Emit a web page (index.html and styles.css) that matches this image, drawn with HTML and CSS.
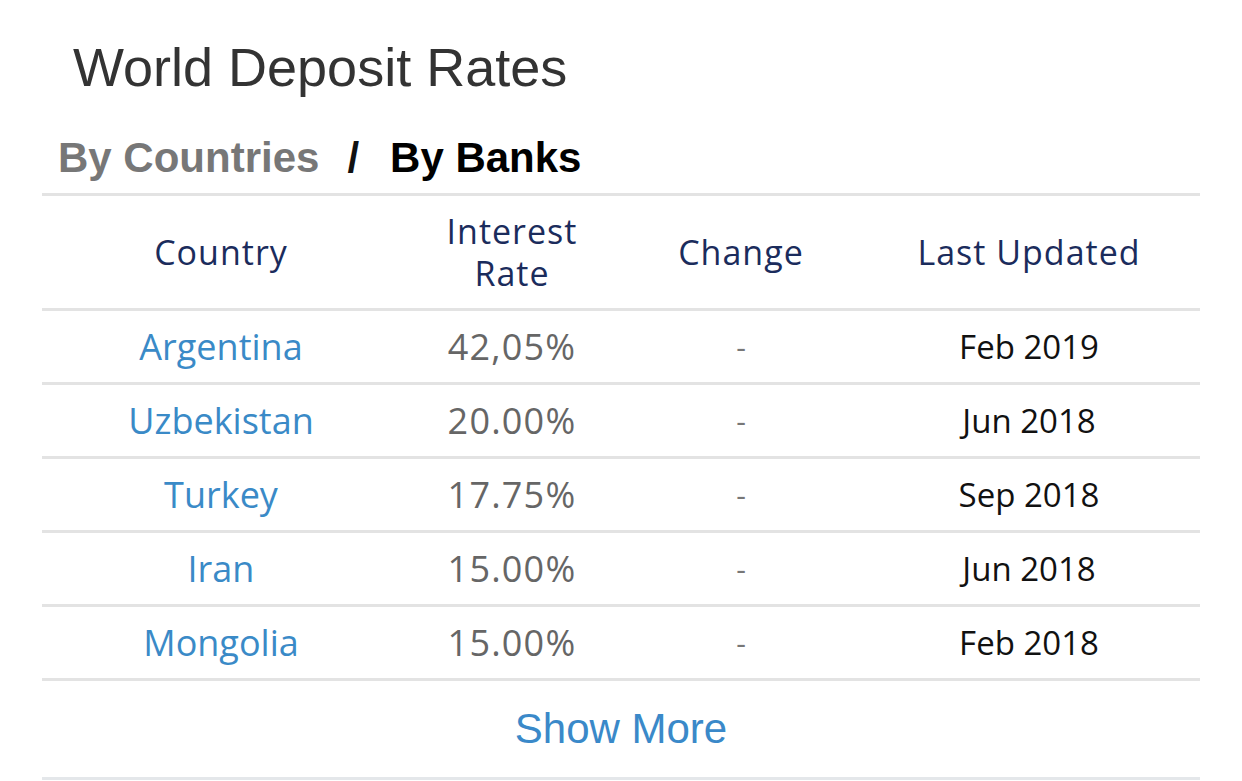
FILE: index.html
```html
<!DOCTYPE html>
<html>
<head>
<meta charset="utf-8">
<link rel="stylesheet" href="styles.css">
</head>
<body>
<div class="page">
  <h1 class="title">World Deposit Rates</h1>
  <div class="tabs">
    <span class="tab tab-inactive">By Countries</span>
    <span class="tab-sep">/</span>
    <span class="tab tab-active">By Banks</span>
  </div>
  <div class="table">
    <div class="row head">
      <div class="cell c1">Country</div>
      <div class="cell c2">Interest<br>Rate</div>
      <div class="cell c3">Change</div>
      <div class="cell c4">Last Updated</div>
    </div>
    <div class="row">
      <div class="cell c1 country">Argentina</div>
      <div class="cell c2 rate">42,05%</div>
      <div class="cell c3 change">-</div>
      <div class="cell c4 date">Feb 2019</div>
    </div>
    <div class="row">
      <div class="cell c1 country">Uzbekistan</div>
      <div class="cell c2 rate">20.00%</div>
      <div class="cell c3 change">-</div>
      <div class="cell c4 date">Jun 2018</div>
    </div>
    <div class="row">
      <div class="cell c1 country">Turkey</div>
      <div class="cell c2 rate">17.75%</div>
      <div class="cell c3 change">-</div>
      <div class="cell c4 date">Sep 2018</div>
    </div>
    <div class="row">
      <div class="cell c1 country">Iran</div>
      <div class="cell c2 rate">15.00%</div>
      <div class="cell c3 change">-</div>
      <div class="cell c4 date">Jun 2018</div>
    </div>
    <div class="row">
      <div class="cell c1 country">Mongolia</div>
      <div class="cell c2 rate">15.00%</div>
      <div class="cell c3 change">-</div>
      <div class="cell c4 date">Feb 2018</div>
    </div>
  </div>
  <div class="more">Show More</div>
</div>
</body>
</html>
```

FILE: styles.css
```css
html, body {
  margin: 0;
  padding: 0;
  background: #fff;
}
.page {
  width: 1158px;
  margin-left: 42px;
  padding-top: 36px;
}
.title {
  margin: 0 0 0 31px;
  font-family: "Liberation Sans", Arial, sans-serif;
  font-weight: normal;
  font-size: 54px;
  line-height: 62px;
  color: #333;
}
.tabs {
  margin-top: 36px;
  padding-left: 16px;
  font-family: "Liberation Sans", Arial, sans-serif;
  font-weight: bold;
  font-size: 42px;
  line-height: 48px;
  height: 48px;
  padding-bottom: 11px;
  border-bottom: 3px solid #e3e3e3;
  display: flex;
}
.tab-inactive { color: #777; }
.tab-sep { color: #111; margin: 0 31px 0 28px; }
.tab-active { color: #000; }
.table {
  font-family: "Open Sans", "Noto Sans", sans-serif;
}
.row {
  display: grid;
  grid-template-columns: 358px 224px 234px 342px;
  height: 71px;
  border-bottom: 3px solid #e3e3e3;
  align-items: center;
}
.row.head {
  height: 112px;
}
.cell {
  text-align: center;
}
.head .cell {
  color: #1b2c5c;
  font-size: 34px;
  letter-spacing: 1px;
  line-height: 42px;
}
.country {
  color: #3a8ac7;
  font-size: 36px;
}
.rate {
  color: #666;
  font-size: 36px;
  letter-spacing: 1.2px;
}
.change {
  color: #777;
  font-size: 30px;
}
.date {
  color: #111;
  font-size: 33px;
}
.more {
  height: 96px;
  display: flex;
  align-items: center;
  justify-content: center;
  font-family: "Liberation Sans", Arial, sans-serif;
  font-size: 42px;
  color: #3a89c9;
  border-bottom: 3px solid #e4e7ea;
}
```
